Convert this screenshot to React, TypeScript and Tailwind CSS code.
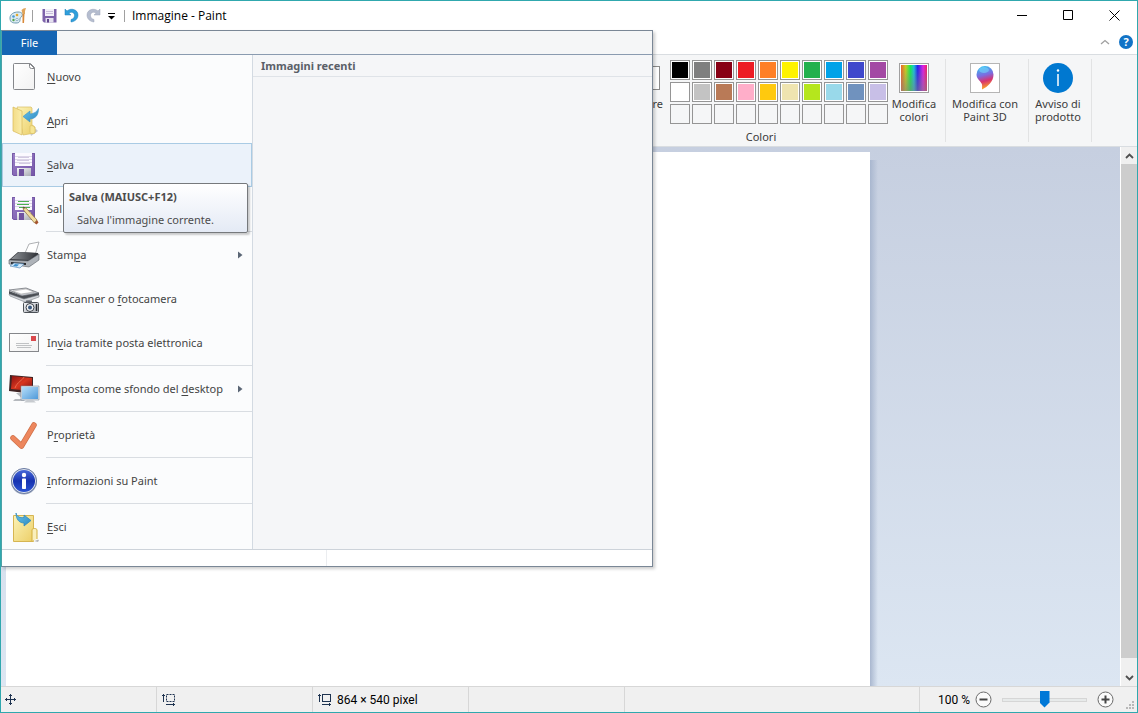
import React, { useState } from "react";

type MenuItem = {
  id: string;
  before: string;
  key: string;
  after: string;
  icon: React.ReactNode;
  submenu?: boolean;
  separator?: boolean;
};

const Floppy = ({ lines = "#d3cbe2" }: { lines?: string }) => (
  <>
    <path d="M4 4h23v23H5.500L4 25.500z" fill="url(#floppyBody)" />
    <path d="M4.500 4.500h22v22H5.800l-1.300-1.300z" fill="none" stroke="#6f529f" strokeWidth=".8" />
    <rect x="7" y="4" width="17" height="13" fill="#fbfaff" />
    <path d="M7 7.500h17M7 10.500h17M7 13.500h17" stroke="#dcd6e8" />
    <path d="M10 8.500h11M9 11.500h12M11 14.500h11" stroke={lines} />
    <rect x="9" y="19" width="14" height="8" fill="url(#metal)" />
    <rect x="11" y="20" width="5" height="7" fill="#6f529f" />
  </>
);

const NewIcon = () => (
  <svg width="32" height="32" viewBox="0 0 32 32">
    <path d="M6.500 2.500h16l4 4v21a1 1 0 0 1-1 1h-19a1 1 0 0 1-1-1v-24a1 1 0 0 1 1-1z" fill="url(#paper)" stroke="#85878b" />
    <path d="M21.500 2.500v3a2 2 0 0 0 2 2h3z" fill="#fff" stroke="#85878b" />
  </svg>
);

const OpenIcon = () => (
  <svg width="32" height="32" viewBox="0 0 32 32">
    <path d="M22 27l6-3 2 2-7 5z" fill="#c9cbd0" />
    <path d="M9 2h14l1 1v17l3 2v6l-12 2z" fill="url(#folder)" stroke="#d9bd62" strokeWidth=".7" />
    <path d="M22 21c2-1 5 0 5 3v3c0 2-5 2-5 0z" fill="#f6e593" stroke="#d9bd62" strokeWidth=".7" />
    <path d="M5 2l9 4v24l-9-4z" fill="url(#folderFront)" stroke="#d9b958" strokeWidth=".7" />
    <path d="M15 11.500l7-5.500v3c4-.5 7-2 8.500-5.500 0 7-3 10-8.500 10.500v3z" fill="url(#arrow)" stroke="#3f92c4" strokeWidth=".6" />
  </svg>
);

const SaveIcon = () => (
  <svg width="32" height="32" viewBox="0 0 32 32">
    <Floppy />
  </svg>
);

const SaveAsIcon = () => (
  <svg width="32" height="32" viewBox="0 0 32 32">
    <Floppy lines="#4caf50" />
    <path d="M15 14l3 1 11 12-2.500 3-11-13z" fill="#f0dca0" stroke="#8a6b35" strokeWidth=".7" />
    <path d="M26.500 30l2.500-3 1.500 2.500-2 2z" fill="#a5542e" />
    <path d="M15 14l2 .5-1 1.500z" fill="#333" />
  </svg>
);

const PrintIcon = () => (
  <svg width="32" height="32" viewBox="0 0 32 32">
    <path d="M17 14l4-9 10-2-4 13z" fill="#fff" stroke="#9a9da1" strokeWidth=".8" />
    <path d="M1 21l9-8 20 1 1 5-9 8z" fill="#35383d" />
    <path d="M3 20l8-7 18 1-8 7z" fill="url(#dark)" />
    <path d="M1 21l19 1 11-7v6l-10 7-20-3z" fill="#aeb3b9" stroke="#5d6268" strokeWidth=".6" />
    <path d="M3 23l15 1v2L3 25z" fill="#2b2d31" />
    <path d="M6 24l10 1-4 4-10-2z" fill="#d5eafa" stroke="#5d8db9" strokeWidth=".7" />
    <path d="M7 25l4 .5-2 2-4-.5z" fill="#3e91cf" />
  </svg>
);

const ScannerIcon = () => (
  <svg width="32" height="32" viewBox="0 0 32 32">
    <path d="M1 7l17-2 13 5-17 3z" fill="url(#metal)" stroke="#5d6268" strokeWidth=".7" />
    <path d="M5 8l13-2 8 3-13 2z" fill="#fff" stroke="#888" strokeWidth=".4" />
    <path d="M1 8l13 5 17-3v3l-15 4L1 11z" fill="#4a4e54" />
    <path d="M1 11l15 5 15-4v2l-14 5L2 13z" fill="#d3d6da" stroke="#7b8086" strokeWidth=".6" />
    <rect x="15.500" y="19.500" width="15" height="10" rx="1" fill="url(#metal)" stroke="#4c5157" />
    <rect x="18" y="17.500" width="6" height="2" fill="#666b72" />
    <circle cx="22" cy="24.500" r="4" fill="#f1f3f5" stroke="#3c4148" />
    <circle cx="22" cy="24.500" r="2" fill="#3a587d" />
    <path d="M28.500 21v7" stroke="#262a2f" strokeWidth="1.500" />
  </svg>
);

const MailIcon = () => (
  <svg width="32" height="32" viewBox="0 0 32 32">
    <rect x="1.500" y="6.500" width="29" height="18" fill="url(#paper)" stroke="#85878b" />
    <rect x="23" y="9" width="5" height="5" fill="#d9494d" />
    <path d="M8 16.500h13M8 18.500h16M9 20.500h14" stroke="#c0c2c4" />
  </svg>
);

const DesktopIcon = () => (
  <svg width="32" height="32" viewBox="0 0 32 32">
    <path d="M2 2l23 2v17L1 18z" fill="#3f2424" />
    <path d="M4 3l20 2v13L3 16z" fill="url(#redScreen)" />
    <path d="M7 15c2-6 8-8 9-11" stroke="#f07a5c" fill="none" strokeWidth=".8" />
    <path d="M8 20h5l1 6H7l-2 2h12" fill="#b5b9be" />
    <rect x="13.500" y="13.500" width="17" height="13" fill="url(#blueScreen)" stroke="#e2e6ea" />
    <path d="M13 13h18v14H13z" fill="none" stroke="#7e8c9a" strokeWidth=".6" />
    <path d="M19 27h6l3 2.500H16z" fill="#c7cbd0" />
  </svg>
);

const CheckIcon = () => (
  <svg width="32" height="32" viewBox="0 0 32 32">
    <path d="M5 19l8.500 8L26 6" fill="none" stroke="#cf7048" strokeWidth="5.500" strokeLinecap="round" strokeLinejoin="round" />
    <path d="M5 19l8.500 8L26 6" fill="none" stroke="#ed875e" strokeWidth="4.200" strokeLinecap="round" strokeLinejoin="round" />
  </svg>
);

const InfoIcon = () => (
  <svg width="32" height="32" viewBox="0 0 32 32">
    <circle cx="16" cy="16.500" r="13" fill="#9ca7bd" />
    <circle cx="16" cy="16" r="12.500" fill="#dfe5f0" stroke="#6a7ba2" />
    <circle cx="16" cy="16" r="11" fill="url(#infoBlue)" />
    <circle cx="16" cy="10" r="2.200" fill="#fff" />
    <rect x="14" y="13.500" width="4" height="10.500" rx=".7" fill="#fff" />
  </svg>
);

const ExitIcon = () => (
  <svg width="32" height="32" viewBox="0 0 32 32">
    <path d="M5.500 4.500h20v26h-20z" fill="url(#folder)" stroke="#d6b552" />
    <path d="M24 30v-11c0-2 5-2 5 0v9" fill="#f9efbc" stroke="#d2ae3c" />
    <path d="M26 30c2 0 3-2 5-1l-1 2z" fill="#b5b6b8" />
    <path d="M8 2c1 4 4 5 8 4.500V4l7 5.500-7 5.500v-3C11 12 8 8 8 2z" fill="url(#arrow)" stroke="#2685bd" strokeWidth=".7" />
  </svg>
);

const Gradients = () => (
  <svg width="0" height="0" className="absolute" aria-hidden="true">
    <defs>
      <linearGradient id="floppyBody" x2="1" y2="1"><stop stopColor="#9b80c8" /><stop offset="1" stopColor="#7455a8" /></linearGradient>
      <linearGradient id="metal" x2="1" y2="1"><stop stopColor="#f5f6f8" /><stop offset="1" stopColor="#a9adb5" /></linearGradient>
      <linearGradient id="dark" x2="1"><stop stopColor="#8f9398" /><stop offset="1" stopColor="#33363b" /></linearGradient>
      <linearGradient id="paper" x2="1" y2="1"><stop stopColor="#ffffff" /><stop offset="1" stopColor="#f2f2f2" /></linearGradient>
      <linearGradient id="folder" x2="1" y2="1"><stop stopColor="#fbf3b8" /><stop offset="1" stopColor="#ecce66" /></linearGradient>
      <linearGradient id="folderFront" x2="1"><stop stopColor="#f3dc88" /><stop offset="1" stopColor="#faedaa" /></linearGradient>
      <linearGradient id="arrow" x2="1" y2="1"><stop stopColor="#69c4ec" /><stop offset="1" stopColor="#2d89c0" /></linearGradient>
      <linearGradient id="redScreen" x2="1" y2="1"><stop stopColor="#8d1212" /><stop offset=".5" stopColor="#d8361f" /><stop offset="1" stopColor="#7c0f0f" /></linearGradient>
      <linearGradient id="blueScreen" x2="1" y2="1"><stop stopColor="#b9e0fa" /><stop offset="1" stopColor="#4c97d8" /></linearGradient>
      <linearGradient id="infoBlue" x2="0" y2="1"><stop stopColor="#4769d8" /><stop offset=".5" stopColor="#1632b0" /><stop offset="1" stopColor="#2c53d2" /></linearGradient>
      <linearGradient id="rainbow"><stop stopColor="#f0622a" /><stop offset=".18" stopColor="#c8d01e" /><stop offset=".36" stopColor="#10f050" /><stop offset=".5" stopColor="#19c0e0" /><stop offset=".64" stopColor="#1f1ff0" /><stop offset=".85" stopColor="#e01fe8" /><stop offset="1" stopColor="#f01f60" /></linearGradient>
      <linearGradient id="greyFade" x2="0" y2="1"><stop stopColor="#808080" stopOpacity="0" /><stop offset="1" stopColor="#808080" stopOpacity=".6" /></linearGradient>
      <linearGradient id="pin" x1=".3" x2=".5" y2="1"><stop stopColor="#35c1f1" /><stop offset=".4" stopColor="#7d6be0" /><stop offset=".65" stopColor="#d8336f" /><stop offset="1" stopColor="#ffb31a" /></linearGradient>
    </defs>
  </svg>
);

const menuItems: MenuItem[] = [
  { id: "new", before: "", key: "N", after: "uovo", icon: <NewIcon /> },
  { id: "open", before: "", key: "A", after: "pri", icon: <OpenIcon /> },
  { id: "save", before: "", key: "S", after: "alva", icon: <SaveIcon /> },
  { id: "saveAs", before: "Sal", key: "v", after: "a con nome", icon: <SaveAsIcon />, submenu: true, separator: true },
  { id: "print", before: "Stam", key: "p", after: "a", icon: <PrintIcon />, submenu: true },
  { id: "scan", before: "Da scanner o ", key: "f", after: "otocamera", icon: <ScannerIcon /> },
  { id: "mail", before: "In", key: "v", after: "ia tramite posta elettronica", icon: <MailIcon />, separator: true },
  { id: "desktop", before: "Imposta come sfondo del ", key: "d", after: "esktop", icon: <DesktopIcon />, submenu: true, separator: true },
  { id: "props", before: "P", key: "r", after: "oprietà", icon: <CheckIcon />, separator: true },
  { id: "about", before: "", key: "I", after: "nformazioni su Paint", icon: <InfoIcon />, separator: true },
  { id: "exit", before: "", key: "E", after: "sci", icon: <ExitIcon /> },
];

const palette = [
  "#000000", "#7f7f7f", "#880015", "#ed1c24", "#ff7f27", "#fff200", "#22b14c", "#00a2e8", "#3f48cc", "#a349a4",
  "#ffffff", "#c3c3c3", "#b97a57", "#ffaec9", "#ffc90e", "#efe4b0", "#b5e61d", "#99d9ea", "#7092be", "#c8bfe7",
  "", "", "", "", "", "", "", "", "", "",
];

const TitleBar = () => (
  <header className="flex h-[29px] shrink-0 items-center bg-white text-black">
    <div className="flex items-center pl-2">
      <svg width="18" height="18" viewBox="0 0 18 18">
        <path d="M1 11c0-4 4-6 8-6 4 0 5 2 4 4s-2 1-2 3 0 4-4 4-6-1-6-5z" fill="#dcebf2" stroke="#6d9ab0" />
        <circle cx="4.500" cy="9.500" r="1.300" fill="#4a9ad4" /><circle cx="8" cy="8" r="1.300" fill="#e0a92c" />
        <circle cx="4.500" cy="13" r="1.200" fill="#51a34c" /><circle cx="8" cy="12.500" r="1.200" fill="#fff" stroke="#5f8fa8" strokeWidth=".6" />
        <path d="M13.500 7l2 0-.5 9h-1.500z" fill="#d98a3a" /><path d="M12.500 3l2-1.500L17 1l-1 3v3h-2.500z" fill="#dfa45a" />
      </svg>
      <span className="ml-[5px] h-3 w-px bg-[#a0a0a0]" />
    </div>
    <div className="flex items-center pl-[9px]">
      <button type="button" aria-label="Salva" className="w-[22px]">
        <svg width="15" height="15" viewBox="0 0 15 15">
          <path d="M.5 1h14v13.500H2L.5 13z" fill="#7d62aa" />
          <rect x="3" y="1" width="9" height="7" fill="#f2f0f8" /><path d="M4 3.500h7M4 5.500h7" stroke="#c9bfdc" />
          <rect x="3.500" y="10" width="8" height="4.500" fill="#e4e0ee" /><rect x="5" y="11" width="2" height="3.500" fill="#60468e" />
        </svg>
      </button>
      <button type="button" aria-label="Annulla" className="w-[22px]">
        <svg width="15" height="15" viewBox="0 0 15 15">
          <path d="M1 1v6h6L4.800 5C8 3 11 5 10.500 8c-.4 2-1.500 3-3.500 3.500V14c4-.5 7-3 7-7C14 1.500 7-.5 3 3z" fill="#2f9fdb" stroke="#1c7fb8" strokeWidth=".5" />
        </svg>
      </button>
      <button type="button" aria-label="Ripeti" className="w-[22px]">
        <svg width="15" height="15" viewBox="0 0 15 15">
          <path d="M14 1v6H8l2.200-2C7 3 4 5 4.500 8c.4 2 1.500 3 3.500 3.500V14C4 13.500 1 11 1 7 1 1.500 8-.5 12 3z" fill="#b5bdcf" stroke="#9da5b9" strokeWidth=".5" />
        </svg>
      </button>
      <button type="button" aria-label="Personalizza barra di accesso rapido" className="w-4">
        <svg width="7" height="8" viewBox="0 0 7 8"><path d="M0 1.500h7" stroke="#000" /><path d="M0 4h7L3.500 7.500z" fill="#000" /></svg>
      </button>
      <span className="h-3 w-px bg-[#a0a0a0]" />
    </div>
    <h1 className="pl-[7px] font-['Open_Sans',sans-serif] text-[12px]">Immagine - Paint</h1>
    <div className="ml-auto flex h-full">
      <button type="button" aria-label="Riduci a icona" className="flex w-[46px] items-center justify-center">
        <svg width="11" height="11" viewBox="0 0 11 11"><path d="M0 5.500h10" stroke="#000" /></svg>
      </button>
      <button type="button" aria-label="Ingrandisci" className="flex w-[46px] items-center justify-center">
        <svg width="11" height="11" viewBox="0 0 11 11"><path d="M.5.5h9v9h-9z" fill="none" stroke="#000" /></svg>
      </button>
      <button type="button" aria-label="Chiudi" className="flex w-[46px] items-center justify-center">
        <svg width="11" height="11" viewBox="0 0 11 11"><path d="M.5.5l10 10M10.500.5l-10 10" stroke="#000" /></svg>
      </button>
    </div>
  </header>
);

const RibbonButton = ({ label, icon }: { label: string; icon: React.ReactNode }) => (
  <button type="button" className="flex flex-col items-center gap-1 pt-[3px] text-[11px] leading-[13px] whitespace-pre-line">
    {icon}
    {label}
  </button>
);

const Ribbon = () => (
  <div className="flex h-[93px] shrink-0 border-y border-[#d9dde1] bg-[#f5f6f7] text-[#3c3c3c]">
    <div className="flex w-[662px] shrink-0 justify-end pt-[11px]">
      <button type="button" className="flex flex-col items-end gap-[7px] text-[11px] leading-[13px]">
        <span className="mr-[3px] h-6 w-6 border border-[#8b8b8b] bg-white" />
        Colore
      </button>
    </div>
    <div className="flex shrink-0 pt-[5px] pl-[7px]">
      <div>
        <div className="grid grid-cols-10 gap-[2px]">
          {palette.map((color, idx) => (
            <button
              key={idx}
              type="button"
              aria-label={color || "Colore personalizzato"}
              className="size-5 border border-[#959595] p-px"
              style={{ backgroundColor: color ? "#ffffff" : undefined }}
            >
              <span className="block size-full" style={{ backgroundColor: color || undefined }} />
            </button>
          ))}
        </div>
        <p className="pr-9 pt-[6px] text-center text-[11px] leading-[14px]">Colori</p>
      </div>
      <div className="flex w-[52px] justify-center">
        <RibbonButton
          label={"Modifica\ncolori"}
          icon={
            <svg width="30" height="30" viewBox="0 0 30 30">
              <rect x=".5" y=".5" width="29" height="29" fill="#fff" stroke="#a0a0a0" />
              <rect x="2" y="2" width="26" height="26" fill="url(#rainbow)" /><rect x="2" y="2" width="26" height="26" fill="url(#greyFade)" />
            </svg>
          }
        />
      </div>
    </div>
    <div className="my-1 ml-[5px] flex w-[84px] shrink-0 justify-center border-x border-[#e2e3e4] pt-px pr-1">
      <RibbonButton
        label={"Modifica con\nPaint 3D"}
        icon={
          <svg width="30" height="30" viewBox="0 0 30 30">
            <rect x=".5" y=".5" width="29" height="29" fill="#fff" stroke="#b5b5b5" />
            <path d="M15 3a8.500 8.500 0 0 0-8.500 8.500c0 5 5 7 5.500 10 .3 2 0 3 0 5 6-3 11.500-8 11.500-15A8.500 8.500 0 0 0 15 3z" fill="url(#pin)" />
            <ellipse cx="14" cy="7" rx="5" ry="3" fill="#7be0ff" opacity=".5" />
          </svg>
        }
      />
    </div>
    <div className="my-1 flex w-[63px] shrink-0 justify-center border-r border-[#e2e3e4] pt-px pr-1">
      <RibbonButton
        label={"Avviso di\nprodotto"}
        icon={
          <svg width="30" height="30" viewBox="0 0 30 30">
            <circle cx="15" cy="15" r="15" fill="#0078d0" />
            <path d="M15 11v12" stroke="#fff" strokeWidth="1.500" /><circle cx="15" cy="7.500" r="1.200" fill="#fff" />
          </svg>
        }
      />
    </div>
  </div>
);

const FileMenu = () => {
  const [hovered, setHovered] = useState("save");

  // the Save tooltip lies over the end of the label below it
  const isCovered = (item: MenuItem) => item.id === "saveAs" && hovered === "save";

  return (
    <div className="absolute top-0 left-0 z-10 w-[652px] border border-l-[#4ba3a8] border-[#7a8796] bg-white shadow-[2px_2px_3px_rgba(0,0,0,0.2)]">
      <div className="flex h-6 border-b border-[#8a9bb0] bg-[#f5f6f7]">
        <button type="button" className="-mb-px w-[55px] bg-[#1565b3] text-[11px] text-white">File</button>
      </div>
      <div className="flex">
        <nav className="relative w-[251px] border-r border-[#d3dae2] bg-[#fbfcfd]">
          {menuItems.map((item) => (
            <React.Fragment key={item.id}>
              <button
                type="button"
                onMouseEnter={() => setHovered(item.id)}
                className={
                  "flex h-11 w-full items-center border pr-2 pl-[5px] text-left " +
                  (hovered === item.id ? "border-[#a9cbe4] bg-[#ebf2fa]" : "border-transparent")
                }
              >
                {item.icon}
                <span className="ml-[7px] whitespace-nowrap">
                  {item.before}
                  {!isCovered(item) && (
                    <>
                      <span className="underline underline-offset-2">{item.key}</span>
                      {item.after}
                    </>
                  )}
                </span>
                {item.submenu && (
                  <svg width="5" height="8" viewBox="0 0 5 8" className="ml-auto"><path d="M0 .5l4.500 3.500L0 7.500z" fill="#5b6675" /></svg>
                )}
              </button>
              {item.separator && <div className="ml-11 h-[2px] border-t border-[#d9dde2]" />}
            </React.Fragment>
          ))}
          {hovered === "save" && (
            <div
              role="tooltip"
              className="absolute top-32 left-[61px] h-[50px] w-[185px] rounded-[2px] border border-[#76797c] bg-linear-to-b from-white to-[#e4eaf5] px-[5px] pt-[5px] leading-[15px] text-[#4c4c4c] shadow-[2px_2px_2px_rgba(0,0,0,0.2)]"
            >
              <p className="font-bold">Salva (MAIUSC+F12)</p>
              <p className="pt-2 pl-2">Salva l'immagine corrente.</p>
            </div>
          )}
        </nav>
        <section className="flex-1 bg-[#f5f6f8]">
          <h2 className="border-b border-[#dfe3e8] px-2 pt-[3px] pb-[2px] leading-4 font-bold text-[#5a6068]">Immagini recenti</h2>
        </section>
      </div>
      <div className="flex h-[17px] border-t border-[#cdd3da]">
        <span className="w-[325px] border-r border-[#ebedf0]" />
      </div>
    </div>
  );
};

const Chevron = ({ down }: { down?: boolean }) => (
  <svg width="9" height="6" viewBox="0 0 9 6">
    <path d={down ? "M1 1l3.500 3.500L8 1" : "M1 5l3.500-3.500L8 5"} fill="none" stroke="#505050" strokeWidth="1.800" />
  </svg>
);

const Workspace = () => (
  <main className="flex min-h-0 flex-1">
    <div className="flex min-w-0 flex-1 overflow-hidden bg-linear-to-b from-[#c6cfe0] to-[#dce6f2] pt-[5px] pl-[5px]">
      <div className="w-[864px] shrink-0 bg-white" />
      <div className="mt-2 w-2 shrink-0 bg-linear-to-r from-[#a9b7cf] to-transparent" />
    </div>
    <div className="flex w-[17px] shrink-0 flex-col border-l border-white bg-[#f0f0f0]">
      <button type="button" aria-label="Scorri su" className="flex h-[17px] items-center justify-center"><Chevron /></button>
      <div className="mb-3 flex-1 bg-[#cdcdcd]" />
      <button type="button" aria-label="Scorri giù" className="flex h-4 items-center justify-center"><Chevron down /></button>
    </div>
  </main>
);

const StatusBar = () => {
  const [zoom, setZoom] = useState(50);

  return (
    <footer className="flex h-[26px] shrink-0 items-center border-t border-[#d7d7d7] bg-[#f0f0f0] font-['Roboto',sans-serif] text-[12px] text-black">
      <div className="flex h-full w-[156px] items-center border-r border-[#d7d7d7] pl-1">
        <svg width="11" height="11" viewBox="0 0 11 11"><path d="M5.500 0v11M0 5.500h11M4 1.500h3M4 9.500h3M1.500 4v3M9.500 4v3" stroke="#1e3350" /></svg>
      </div>
      <div className="flex h-full w-[156px] items-center border-r border-[#d7d7d7] pl-[5px]">
        <svg width="14" height="13" viewBox="0 0 14 13" fill="none" stroke="#1e3350">
          <path d="M1.500 1v8M0 2.500h3M4 11.500h9M11.500 10v3" /><rect x="4.500" y="1.500" width="8" height="7" strokeDasharray="2 1" />
        </svg>
      </div>
      <div className="flex h-full w-[156px] items-center gap-[5px] border-r border-[#d7d7d7] pl-[5px]">
        <svg width="14" height="13" viewBox="0 0 14 13" fill="none" stroke="#1e3350">
          <path d="M1.500 1v8M0 2.500h3M4 11.500h9M11.500 10v3" /><rect x="4.500" y="1.500" width="8" height="7" />
        </svg>
        864 × 540 pixel
      </div>
      <div className="h-full w-[156px] border-r border-[#d7d7d7]" />
      <div className="ml-auto flex h-full items-center border-l border-[#d7d7d7] pl-[18px]">
        <label htmlFor="zoom" className="w-[37px]">100 %</label>
        <button type="button" aria-label="Zoom indietro" onClick={() => setZoom(Math.max(0, zoom - 10))}>
          <svg width="17" height="17" viewBox="0 0 17 17" fill="none"><circle cx="8.500" cy="8.500" r="7.500" fill="#fafafa" stroke="#6b6b6b" /><path d="M4.500 8.500h8" stroke="#444" strokeWidth="2" /></svg>
        </button>
        <input
          id="zoom"
          type="range"
          value={zoom}
          onChange={(e) => setZoom(Number(e.target.value))}
          className="mx-[10px] h-4 w-[85px] appearance-none bg-transparent [&::-webkit-slider-runnable-track]:h-1 [&::-webkit-slider-runnable-track]:border [&::-webkit-slider-runnable-track]:border-[#d6d6d6] [&::-webkit-slider-runnable-track]:bg-[#e7eaea] [&::-webkit-slider-thumb]:-mt-2 [&::-webkit-slider-thumb]:h-[17px] [&::-webkit-slider-thumb]:w-[10px] [&::-webkit-slider-thumb]:appearance-none [&::-webkit-slider-thumb]:bg-[#0078d7] [&::-webkit-slider-thumb]:[clip-path:polygon(0_0,100%_0,100%_70%,50%_100%,0_70%)]"
        />
        <button type="button" aria-label="Zoom avanti" onClick={() => setZoom(Math.min(100, zoom + 10))}>
          <svg width="17" height="17" viewBox="0 0 17 17" fill="none"><circle cx="8.500" cy="8.500" r="7.500" fill="#fafafa" stroke="#6b6b6b" /><path d="M4.500 8.500h8M8.500 4.500v8" stroke="#444" strokeWidth="2" /></svg>
        </button>
        <svg width="9" height="9" viewBox="0 0 9 9" className="mr-[2px] mb-[2px] ml-3 self-end" fill="#b8b8b8">
          <path d="M6 0h2v2H6zM3 3h2v2H3zM6 3h2v2H6zM0 6h2v2H0zM3 6h2v2H3zM6 6h2v2H6z" />
        </svg>
      </div>
    </footer>
  );
};

const App = () => {
  return (
    <div className="flex h-screen flex-col overflow-hidden border border-[#30a8ae] bg-white font-['Noto_Sans',sans-serif] text-[11px] text-[#444444]">
      <Gradients />
      <TitleBar />
      <div className="relative flex min-h-0 flex-1 flex-col">
        <div className="flex h-6 shrink-0 items-center justify-end gap-[9px] bg-white pr-1">
          <button type="button" aria-label="Riduci barra multifunzione">
            <svg width="10" height="6" viewBox="0 0 10 6"><path d="M1 5l4-3.500L9 5" fill="none" stroke="#a0a0a0" strokeWidth="1.300" /></svg>
          </button>
          <button type="button" aria-label="Guida" className="flex size-[14px] items-center justify-center rounded-full bg-[#1173c6] text-[11px] font-bold text-white">?</button>
        </div>
        <Ribbon />
        <Workspace />
        <FileMenu />
      </div>
      <StatusBar />
    </div>
  );
};

export default App;
